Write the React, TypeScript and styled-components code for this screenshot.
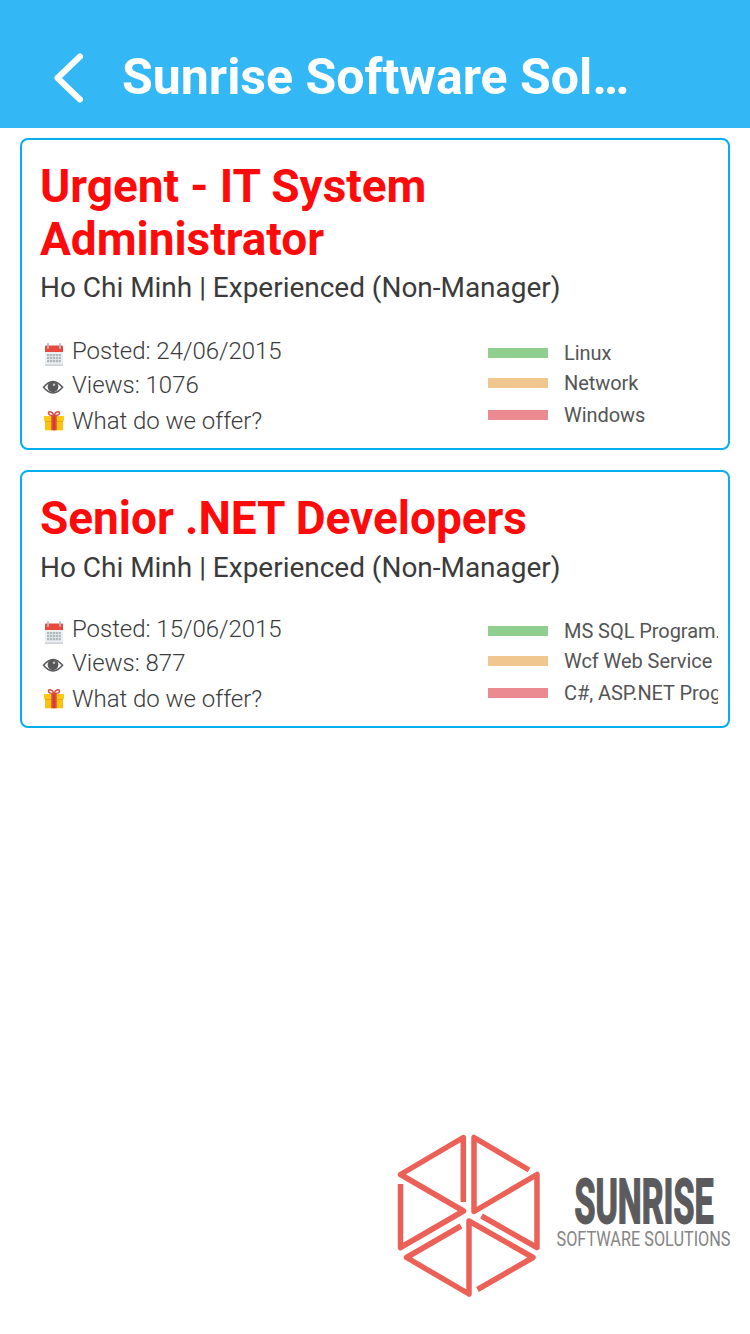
import React from "react";
import styled, { createGlobalStyle } from "styled-components";

const GlobalStyle = createGlobalStyle`
  * { box-sizing: border-box; }
  body {
    margin: 0;
    background: #fff;
    font-family: Roboto, "Liberation Sans", sans-serif;
  }
`;

const Screen = styled.div`
  display: flex;
  flex-direction: column;
  width: 750px;
  height: 1334px;
  overflow: hidden;
`;

const Header = styled.header`
  display: flex;
  align-items: center;
  height: 128px;
  padding: 28px 50px 0;
  background: #34b8f5;
`;

const BackButton = styled.button`
  display: flex;
  width: 38px;
  height: 56px;
  padding: 0;
  border: 0;
  background: none;
`;

const HeaderTitle = styled.h1`
  margin: -3px 0 0 34px;
  color: #fff;
  font-size: 50px;
  font-weight: 700;
  line-height: 60px;
  white-space: nowrap;
`;

const JobList = styled.main`
  display: flex;
  flex-direction: column;
  gap: 20px;
  padding: 10px 20px 0;
`;

const JobCard = styled.article<{ $height: number }>`
  display: flex;
  flex-direction: column;
  height: ${(p) => p.$height}px;
  padding: 20px 10px 13px 18px;
  border: 2px solid #04aeef;
  border-radius: 8px;
`;

const JobTitle = styled.h2`
  width: 520px;
  margin: 0;
  color: #ff0a0a;
  font-size: 46px;
  font-weight: 700;
  letter-spacing: -0.04px;
  line-height: 53px;
`;

const JobPlace = styled.p<{ $gap: number }>`
  margin: ${(p) => p.$gap}px 0 0;
  color: #3b3b3b;
  font-size: 28px;
  letter-spacing: -0.02px;
  line-height: 33px;
`;

const Details = styled.div`
  display: grid;
  grid-template-columns: 448px 1fr;
  margin-top: auto;
`;

const MetaList = styled.ul`
  display: grid;
  grid-template-rows: 34px 36px 28px;
  margin: 0;
  padding: 0;
  list-style: none;
`;

const MetaItem = styled.li`
  display: flex;
  gap: 6px;
  height: 28px;
  color: #3b3b3b;
  font-size: 24px;
  font-weight: 300;
  letter-spacing: -0.03px;
  line-height: 28px;
`;

const IconBox = styled.span`
  display: flex;
  width: 26px;
  height: 32px;
  flex: none;
`;

const TagList = styled.ul`
  display: grid;
  grid-template-rows: 30px 32px 24px;
  margin: 4px 0 0;
  padding: 0;
  overflow: hidden;
  list-style: none;
`;

const TagItem = styled.li`
  display: flex;
  align-items: center;
  gap: 16px;
  height: 24px;
  color: #555;
  font-size: 20px;
  letter-spacing: -0.06px;
  line-height: 24px;
  white-space: nowrap;
`;

const TagBar = styled.span<{ $color: string }>`
  flex: none;
  width: 60px;
  height: 10px;
  background: ${(p) => p.$color};
`;

const Footer = styled.footer`
  display: flex;
  justify-content: flex-end;
  margin-top: auto;
  padding: 0 16px 30px 0;
`;

const CalendarIcon = () => (
  <svg width="26" height="32" viewBox="0 0 26 32">
    <rect x="5" y="11" width="18" height="18" rx="1" fill="#eceff1" />
    <path d="M5 27.500h18v1.200H5z" fill="#c3cbd0" />
    <path d="M5 15V9.500q0-1 1-1h16q1 0 1 1V15z" fill="#e8493f" />
    <path d="M8 7v4M20 7v4" stroke="#b4bcc1" strokeWidth="1.800" strokeLinecap="round" />
    <path
      d="M7 18.200h14M7 21.200h14M7 24.200h14"
      stroke="#b0b9be"
      strokeWidth="2.300"
      strokeDasharray="2.300 0.600"
    />
  </svg>
);

const EyeIcon = () => (
  <svg width="26" height="32" viewBox="0 0 26 32">
    <path d="M3.500 16.300Q13 4.500 22.600 16.300Q13 27.500 3.500 16.300z" fill="#fff" stroke="#58585a" strokeWidth="1.500" />
    <circle cx="13" cy="15.800" r="5.400" fill="#58585a" />
    <circle cx="14" cy="13.800" r="1.200" fill="#c4c4c5" />
  </svg>
);

const GiftIcon = () => (
  <svg width="26" height="32" viewBox="0 0 26 32">
    <path d="M5 13h18v10.300H5z" fill="#fcc210" />
    <path d="M4 9h20v5H4z" fill="#ffc914" />
    <path d="M5 14h18v1H5z" fill="#e9a60c" />
    <path d="M11.300 9h5.400v14.300h-5.400z" fill="#e04a3d" />
    <path d="M13.300 9h1.400v14.300h-1.400z" fill="#c53d35" />
    <path
      d="M14 8.500C12 4 8.500 4 8.500 6.200c0 1.500 2.500 2.300 5.500 2.300s5.500-.8 5.500-2.300C19.500 4 16 4 14 8.500z"
      fill="none"
      stroke="#dc4a40"
      strokeWidth="1.500"
    />
  </svg>
);

const SunriseLogo = () => (
  <svg width="344" height="174" viewBox="390 1130 344 174">
    <g fill="none" stroke="#eb6157" strokeWidth="5.500" strokeLinejoin="round">
      <path d="M463.300 1202V1137.500L400.500 1174.500L463.500 1211L400.500 1247.500V1184" />
      <path d="M529 1170L474 1137.500V1211.500L537 1174.500V1247.500L481.500 1216" />
      <path d="M461 1226L406.500 1257.500L469 1294V1221L533 1257.500L477.500 1289.500" />
    </g>
    <text
      x="574.500"
      y="1223.300"
      fontSize="61"
      fontWeight="700"
      fill="#5b5b5d"
      stroke="#5b5b5d"
      strokeWidth="1.800"
      textLength="139"
      lengthAdjust="spacingAndGlyphs"
    >
      SUNRISE
    </text>
    <text x="556.500" y="1245.500" fontSize="21" fontWeight="400" fill="#858585" textLength="174" lengthAdjust="spacingAndGlyphs">
      SOFTWARE SOLUTIONS
    </text>
  </svg>
);

const TAG_COLORS = ["#90cf90", "#efc78f", "#ec8a92"];

const JOBS = [
  {
    title: "Urgent - IT System Administrator",
    posted: "24/06/2015",
    views: 1076,
    tags: ["Linux", "Network", "Windows"],
    height: 312,
    gap: 5,
  },
  {
    title: "Senior .NET Developers",
    posted: "15/06/2015",
    views: 877,
    tags: ["MS SQL Program...", "Wcf Web Service", "C#, ASP.NET Prog..."],
    height: 258,
    gap: 6,
  },
];

export default function App() {
  return (
    <Screen>
      <GlobalStyle />
      <Header>
        <BackButton aria-label="Back">
          <svg width="38" height="56" viewBox="0 0 38 56">
            <path d="M30 6.500L7.500 28L30 49.500" fill="none" stroke="#fff" strokeWidth="6" strokeLinecap="round" strokeLinejoin="round" />
          </svg>
        </BackButton>
        <HeaderTitle>Sunrise Software Sol…</HeaderTitle>
      </Header>
      <JobList>
        {JOBS.map((job) => (
          <JobCard key={job.title} $height={job.height}>
            <JobTitle>{job.title}</JobTitle>
            <JobPlace $gap={job.gap}>Ho Chi Minh | Experienced (Non-Manager)</JobPlace>
            <Details>
              <MetaList>
                <MetaItem>
                  <IconBox><CalendarIcon /></IconBox>Posted: {job.posted}
                </MetaItem>
                <MetaItem>
                  <IconBox><EyeIcon /></IconBox>Views: {job.views}
                </MetaItem>
                <MetaItem>
                  <IconBox><GiftIcon /></IconBox>What do we offer?
                </MetaItem>
              </MetaList>
              <TagList>
                {job.tags.map((tag, i) => (
                  <TagItem key={tag}>
                    <TagBar $color={TAG_COLORS[i]} />
                    {tag}
                  </TagItem>
                ))}
              </TagList>
            </Details>
          </JobCard>
        ))}
      </JobList>
      <Footer>
        <SunriseLogo />
      </Footer>
    </Screen>
  );
}
